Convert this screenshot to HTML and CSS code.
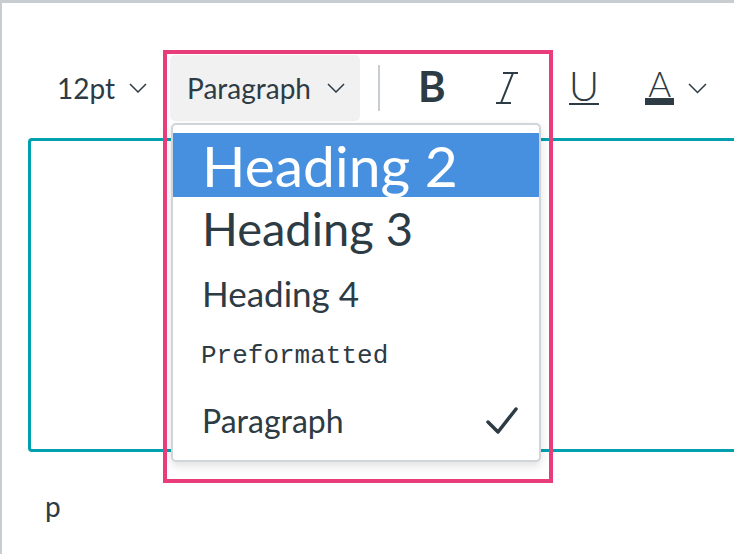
FILE: index.html
```html
<!DOCTYPE html>
<html lang="en">
<head>
  <meta charset="UTF-8" />
  <title>Editor</title>
  <link rel="stylesheet" href="styles.css">
</head>
<body>
  <div class="frame">
    <div class="toolbar">
      <button class="tb-btn tb-size">
        <span>12pt</span>
        <svg class="chev" width="18" height="10" viewBox="0 0 18 10"><polyline points="1,1 9,9 17,1"/></svg>
      </button>
      <button class="tb-btn tb-block">
        <span>Paragraph</span>
        <svg class="chev" width="18" height="10" viewBox="0 0 18 10"><polyline points="1,1 9,9 17,1"/></svg>
      </button>
      <div class="tb-sep"></div>
      <button class="tb-btn tb-icon tb-bold">B</button>
      <button class="tb-btn tb-icon tb-italic">
        <svg width="24" height="32" viewBox="0 0 24 32"><path d="M8 1H23M1 31H16M18 1L6 31"/></svg>
      </button>
      <button class="tb-btn tb-icon tb-under"><span>U</span></button>
      <button class="tb-btn tb-icon tb-color">
        <span class="color-a">A</span>
        <svg class="chev" width="19" height="11" viewBox="0 0 19 11"><polyline points="1,1 9.5,9.5 18,1"/></svg>
      </button>
    </div>

    <div class="editor"></div>
    <div class="path">p</div>

    <!-- block format menu, opened from the Paragraph button -->
    <ul class="menu">
      <li class="item h2 active">Heading 2</li>
      <li class="item h3">Heading 3</li>
      <li class="item h4">Heading 4</li>
      <li class="item pre">Preformatted</li>
      <li class="item para">
        <span>Paragraph</span>
        <svg class="check" width="32" height="28" viewBox="0 0 32 28"><polyline points="2,15 12,25 30,2"/></svg>
      </li>
    </ul>

    <div class="highlight"></div>
  </div>
</body>
</html>
```

FILE: styles.css
```css
*, *::before, *::after { box-sizing: border-box; }

body {
  margin: 0;
  background: #fff;
  font-family: 'Lato', 'Noto Sans', sans-serif;
  color: #2d3b45;
}

.frame {
  position: relative;
  height: 554px;
  border-top: 3px solid #c7cdd1;
  border-left: 2px solid #c7cdd1;
  overflow: hidden;
}

.toolbar {
  display: flex;
  align-items: center;
  height: 66px;
  margin-top: 52px;
  padding-left: 55px;
}

.tb-btn {
  display: flex;
  align-items: center;
  height: 66px;
  padding: 0;
  border: none;
  background: none;
  color: #2d3b45;
  font-family: inherit;
  font-size: 28px;
}

.chev polyline {
  fill: none;
  stroke: #2d3b45;
  stroke-width: 1.5;
}

.tb-size span { margin-right: 14px; }

.tb-block {
  width: 190px;
  margin-left: 23px;
  padding: 0 15px 0 17px;
  justify-content: space-between;
  background: #f1f1f1;
  border-radius: 5px;
}

.tb-sep {
  width: 2px;
  height: 46px;
  margin-left: 18px;
  background: #c7cdd1;
}

.tb-icon { height: 40px; }

.tb-bold {
  margin-left: 38px;
  margin-bottom: 3px;
  font-size: 42px;
  font-weight: 700;
  line-height: 31px;
}

.tb-italic {
  margin-left: 49px;
}

.tb-italic path {
  fill: none;
  stroke: #2d3b45;
  stroke-width: 2;
}

.tb-under {
  margin-left: 50px;
}

.tb-under span {
  font-size: 42px;
  font-weight: 300;
  line-height: 29px;
  border-bottom: 2px solid #2d3b45;
  padding: 0 0 3px;
}

.tb-color {
  margin-left: 46px;
}

.color-a {
  font-size: 35px;
  font-weight: 300;
  line-height: 25px;
  border-bottom: 7px solid #2d3b45;
  padding: 0 3px 2px;
  margin-right: 14px;
}

.editor {
  margin: 17px -20px 0 26px;
  height: 314px;
  border: 3px solid #00a0ae;
  border-right: none;
  border-radius: 4px 0 0 4px;
}

.path {
  margin: 37px 0 0 43px;
  font-size: 28px;
  line-height: 34px;
}

.menu {
  position: absolute;
  left: 169px;
  top: 120px;
  width: 370px;
  margin: 0;
  padding: 8px 0 3px;
  list-style: none;
  background: #fff;
  border: 2px solid #d0d5d9;
  border-radius: 5px;
  box-shadow: 0 4px 10px rgba(0, 0, 0, 0.12);
}

.item {
  padding-left: 29px;
  white-space: nowrap;
}

.item.active {
  background: #4790df;
  color: #fff;
}

.h2 { font-size: 57px; line-height: 64px; }
.h3 { font-size: 47px; line-height: 62px; }
.h4 { font-size: 35px; line-height: 69px; }

.pre {
  padding-left: 28px;
  font-family: 'Liberation Mono', monospace;
  font-size: 26px;
  line-height: 56px;
}

.para {
  display: flex;
  align-items: center;
  justify-content: space-between;
  padding-right: 21px;
  font-size: 32px;
  line-height: 73px;
}

.check polyline {
  fill: none;
  stroke: #2d3b45;
  stroke-width: 3.5;
  stroke-linecap: round;
  stroke-linejoin: round;
}

.highlight {
  position: absolute;
  left: 161px;
  top: 47px;
  width: 390px;
  height: 433px;
  border: 4px solid #e93d7b;
  pointer-events: none;
}
```
